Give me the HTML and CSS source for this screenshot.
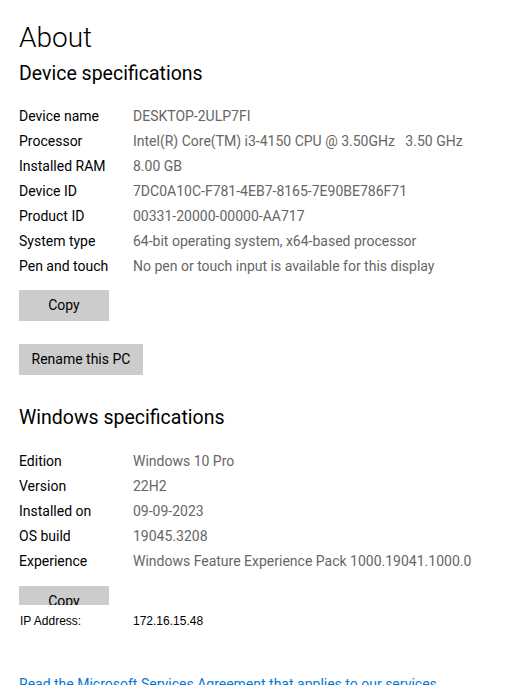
FILE: index.html
```html
<!DOCTYPE html>
<html lang="en">
<head>
<meta charset="utf-8">
<title>About</title>
<link rel="stylesheet" href="styles.css">
</head>
<body>
<main class="about">
  <h1 class="page-title">About</h1>

  <h2 class="section-title section-title--first">Device specifications</h2>
  <dl class="specs specs--device">
    <div class="spec-row"><dt>Device name</dt><dd>DESKTOP-2ULP7FI</dd></div>
    <div class="spec-row"><dt>Processor</dt><dd>Intel(R) Core(TM) i3-4150 CPU @ 3.50GHz&nbsp;&nbsp;&nbsp;3.50 GHz</dd></div>
    <div class="spec-row"><dt>Installed RAM</dt><dd>8.00 GB</dd></div>
    <div class="spec-row"><dt>Device ID</dt><dd>7DC0A10C-F781-4EB7-8165-7E90BE786F71</dd></div>
    <div class="spec-row"><dt>Product ID</dt><dd>00331-20000-00000-AA717</dd></div>
    <div class="spec-row"><dt>System type</dt><dd>64-bit operating system, x64-based processor</dd></div>
    <div class="spec-row"><dt>Pen and touch</dt><dd>No pen or touch input is available for this display</dd></div>
  </dl>
  <div class="actions">
    <button class="btn btn--copy" type="button">Copy</button>
    <button class="btn btn--rename" type="button">Rename this PC</button>
  </div>

  <h2 class="section-title section-title--second">Windows specifications</h2>
  <dl class="specs specs--windows">
    <div class="spec-row"><dt>Edition</dt><dd>Windows 10 Pro</dd></div>
    <div class="spec-row"><dt>Version</dt><dd>22H2</dd></div>
    <div class="spec-row"><dt>Installed on</dt><dd>09-09-2023</dd></div>
    <div class="spec-row"><dt>OS build</dt><dd>19045.3208</dd></div>
    <div class="spec-row"><dt>Experience</dt><dd>Windows Feature Experience Pack 1000.19041.1000.0</dd></div>
  </dl>
  <div class="btn-clip">
    <button class="btn btn--copy" type="button">Copy</button>
  </div>

  <div class="ip-row">
    <span class="ip-label">IP Address:</span>
    <span class="ip-value">172.16.15.48</span>
  </div>

  <a class="agreement-link" href="#">Read the Microsoft Services Agreement that applies to our services</a>
</main>
</body>
</html>
```
FILE: styles.css
```css
html, body {
  margin: 0;
  padding: 0;
  background: #ffffff;
}

body {
  font-family: Roboto, "Liberation Sans", sans-serif;
  font-size: 14px;
  color: #000000;
  overflow: hidden;
  height: 685px;
}

.about {
  padding: 20px 19px 0 19px;
  display: flex;
  flex-direction: column;
  align-items: flex-start;
}

.page-title {
  margin: 0;
  font-size: 28px;
  line-height: 36px;
  font-weight: 300;
  color: #000000;
}

.section-title {
  margin: 0;
  font-size: 19.5px;
  line-height: 28px;
  font-weight: 400;
  color: #000000;
}

.section-title--first {
  margin-top: 4px;
}

.section-title--second {
  margin-top: 29px;
}

.specs {
  margin: 0;
  display: flex;
  flex-direction: column;
}

.specs--device {
  margin-top: 16px;
}

.specs--windows {
  margin-top: 17px;
}

.spec-row {
  display: grid;
  grid-template-columns: 114px auto;
  line-height: 25px;
  height: 25px;
  white-space: nowrap;
}

.spec-row dt {
  color: #000000;
}

.spec-row dd {
  margin: 0;
  color: #666666;
}

.actions {
  display: flex;
  flex-direction: column;
  align-items: flex-start;
  gap: 23px;
  margin-top: 11px;
}

.btn {
  font-family: Roboto, "Liberation Sans", sans-serif;
  font-size: 14px;
  color: #000000;
  background: #cccccc;
  border: none;
  border-radius: 0;
  height: 31px;
  line-height: 31px;
  padding: 0 12.5px;
  min-width: 90px;
  margin: 0;
  text-align: center;
}

.btn-clip {
  margin-top: 12px;
  height: 19px;
  overflow: hidden;
}

.ip-row {
  display: grid;
  grid-template-columns: 114px auto;
  margin-top: 9px;
  font-family: "Liberation Sans", Arial, sans-serif;
  font-size: 12px;
  line-height: 15px;
  color: #000000;
  white-space: nowrap;
}

.ip-label {
  padding-left: 1px;
}

.agreement-link {
  margin-top: 45px;
  font-size: 14px;
  line-height: 20px;
  color: #0078d7;
  text-decoration: none;
  white-space: nowrap;
}
```
